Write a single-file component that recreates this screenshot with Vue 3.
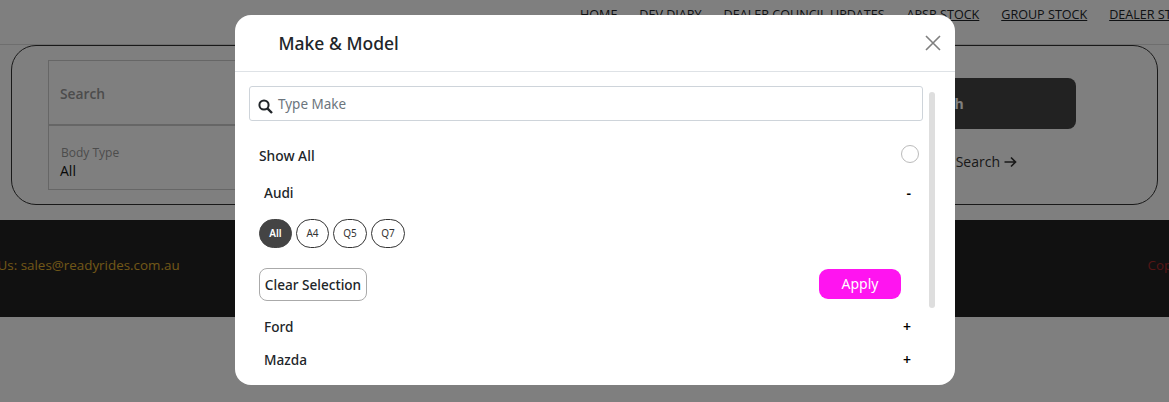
<template>
  <div class="page">
    <header class="topbar">
      <nav class="nav">
        <a v-for="link in links" :key="link" class="nav-link">{{ link }}</a>
      </nav>
    </header>

    <section class="panel">
      <div class="filters">
        <div class="filter-row search-row">Search</div>
        <div class="filter-row body-row">
          <span class="filter-label">Body Type</span>
          <span class="filter-value">All</span>
        </div>
      </div>
      <div class="actions">
        <button class="search-btn">Search</button>
        <a class="adv-link">
          Advanced Search
          <svg class="arrow" width="13" height="12" viewBox="0 0 13 12">
            <path d="M0.5 6 H11.5 M7 1.5 L11.5 6 L7 10.5" stroke="#333" stroke-width="1.7" fill="none" />
          </svg>
        </a>
      </div>
    </section>

    <footer class="footer">
      <span class="contact">Email Us: sales@readyrides.com.au</span>
      <span class="copy">Copyright</span>
    </footer>

    <div class="backdrop"></div>

    <div class="modal">
      <div class="modal-head">
        <h2 class="modal-title">Make &amp; Model</h2>
        <svg class="close" width="16" height="16" viewBox="0 0 16 16">
          <path d="M1 1 L15 15 M15 1 L1 15" stroke="#7f7f7f" stroke-width="1.6" fill="none" />
        </svg>
      </div>
      <div class="modal-body">
        <div class="scrollbar"></div>
        <div class="make-search">
          <svg class="search-icon" width="15" height="15" viewBox="0 0 15 15">
            <circle cx="6" cy="6" r="4.6" stroke="#212529" stroke-width="2" fill="none" />
            <path d="M9.6 9.6 L14 14" stroke="#212529" stroke-width="2.4" fill="none" />
          </svg>
          <span class="placeholder">Type Make</span>
        </div>
        <div class="show-all">
          <span>Show All</span>
          <span class="radio"></span>
        </div>
        <div class="make-row audi">
          <span>Audi</span>
          <span class="toggle">-</span>
        </div>
        <div class="chips">
          <span v-for="m in models" :key="m" class="chip" :class="{ active: m === 'All' }">{{ m }}</span>
        </div>
        <div class="selection">
          <button class="clear">Clear Selection</button>
          <button class="apply">Apply</button>
        </div>
        <div class="make-row ford">
          <span>Ford</span>
          <span class="toggle">+</span>
        </div>
        <div class="make-row mazda">
          <span>Mazda</span>
          <span class="toggle">+</span>
        </div>
      </div>
    </div>
  </div>
</template>

<script setup>
const links = ['HOME', 'DEV DIARY', 'DEALER COUNCIL UPDATES', 'APSR STOCK', 'GROUP STOCK', 'DEALER STOCK']
const models = ['All', 'A4', 'Q5', 'Q7']
</script>

<style>
html, body {
  margin: 0;
  background: #808080;
  overflow: hidden;
}
</style>

<style scoped>
.page {
  position: relative;
  width: 1169px;
  height: 402px;
  overflow: hidden;
  background: #fff;
  font-family: "Open Sans", "Noto Sans", sans-serif;
  color: #212529;
}

.topbar {
  height: 44px;
  border-bottom: 1px solid #ddd;
  box-sizing: content-box;
  overflow: hidden;
}

.nav {
  display: flex;
  gap: 21.9px;
  padding: 7px 0 0 580px;
  width: 800px;
}

.nav-link {
  flex: none;
  font-size: 12.6px;
  line-height: 16px;
  color: #212529;
  text-decoration: underline;
  white-space: nowrap;
}

.panel {
  display: flex;
  align-items: flex-start;
  height: 160px;
  margin: 0 11px;
  box-sizing: border-box;
  border: 1px solid #333;
  border-radius: 25px;
  padding: 14px 81px 0 36px;
}

.filters {
  width: 500px;
  height: 130px;
  box-sizing: border-box;
  border: 1px solid #ccc;
}

.filter-row {
  box-sizing: border-box;
  padding-left: 11px;
}

.search-row {
  height: 65px;
  border-bottom: 2px solid #ccc;
  line-height: 65px;
  font-size: 13.8px;
  font-weight: 600;
  color: #999;
}

.body-row {
  display: flex;
  flex-direction: column;
  padding-top: 20px;
}

.filter-label {
  padding-left: 1px;
  font-size: 12px;
  font-weight: 500;
  line-height: 14px;
  color: #999;
}

.filter-value {
  font-size: 14px;
  line-height: 22px;
  color: #111;
}

.actions {
  margin-left: auto;
  padding-top: 18px;
  width: 272px;
  display: flex;
  flex-direction: column;
  align-items: flex-end;
}

.search-btn {
  width: 272px;
  height: 51px;
  border: 0;
  border-radius: 8px;
  background: #444;
  color: #fff;
  font-family: inherit;
  font-size: 14px;
  font-weight: 700;
}

.adv-link {
  display: flex;
  align-items: center;
  gap: 4px;
  margin-top: 23px;
  margin-right: 59px;
  font-size: 14px;
  line-height: 20px;
  white-space: nowrap;
  color: #333;
}

.footer {
  display: flex;
  justify-content: space-between;
  align-items: center;
  height: 97px;
  margin-top: 15px;
  padding: 0 0 8px;
  box-sizing: border-box;
  background: #222;
  font-size: 13.4px;
}

.contact {
  margin-left: -40px;
  color: #e0b030;
}

.copy {
  margin-right: -39px;
  color: #a82c2c;
}

.backdrop {
  position: absolute;
  inset: 0;
  background: rgba(0, 0, 0, 0.5);
}

.modal {
  position: absolute;
  left: 235px;
  top: 15px;
  width: 720px;
  height: 370px;
  border-radius: 16px;
  background: #fff;
  overflow: hidden;
  font-family: "Noto Sans", "Open Sans", sans-serif;
}

.modal-head {
  display: flex;
  align-items: center;
  justify-content: space-between;
  height: 57px;
  box-sizing: border-box;
  padding: 0 14px 0 43.5px;
  border-bottom: 1px solid #dee2e6;
}

.modal-title {
  margin: 0 0 1px;
  font-size: 17.5px;
  font-weight: 500;
  line-height: 24px;
  color: #212529;
}

.modal-body {
  position: relative;
  padding: 14px 32px 0 14px;
}

.scrollbar {
  position: absolute;
  left: 694px;
  top: 20px;
  width: 6px;
  height: 216px;
  border-radius: 3px;
  background: #dedede;
}

.make-search {
  display: flex;
  align-items: center;
  gap: 5px;
  height: 35px;
  box-sizing: border-box;
  border: 1px solid #ced4da;
  border-radius: 3px;
  padding-left: 8px;
}

.search-icon {
  margin-top: 5px;
}

.placeholder {
  font-size: 13.5px;
  color: #6c757d;
  line-height: 19px;
  margin-top: 1px;
}

.show-all {
  display: flex;
  align-items: center;
  justify-content: space-between;
  height: 20px;
  margin-top: 24px;
  padding: 0 4px 0 10px;
  font-size: 13.8px;
  font-weight: 500;
}

.radio {
  width: 18px;
  height: 18px;
  box-sizing: border-box;
  border: 1px solid #bbb;
  border-radius: 50%;
  margin-top: -3px;
}

.make-row {
  display: flex;
  align-items: center;
  justify-content: space-between;
  height: 20px;
  padding: 0 12px 0 15px;
  font-size: 13.6px;
  font-weight: 500;
}

.audi {
  margin-top: 17px;
}

.toggle {
  font-size: 14px;
  font-weight: 600;
  color: #000;
}

.chips {
  display: flex;
  gap: 4px;
  margin-top: 17px;
  padding-left: 10px;
}

.chip {
  width: 34px;
  height: 29px;
  box-sizing: border-box;
  display: flex;
  align-items: center;
  justify-content: center;
  border: 1px solid #333;
  border-radius: 15px;
  padding-bottom: 1px;
  font-size: 10px;
  color: #333;
}

.chip:nth-child(2) {
  width: 33px;
}

.chip.active {
  width: 33px;
  background: #444;
  border-color: #444;
  color: #fff;
  font-weight: 600;
}

.selection {
  display: flex;
  align-items: flex-start;
  justify-content: space-between;
  margin-top: 20px;
  padding: 0 22px 0 10px;
}

.clear {
  width: 108px;
  height: 33px;
  padding: 0 0 1px;
  background: #fff;
  border: 1px solid #aaa;
  border-radius: 8px;
  font-family: inherit;
  font-size: 13.6px;
  font-weight: 500;
  color: #212529;
  white-space: nowrap;
}

.apply {
  width: 82px;
  height: 30px;
  margin-top: 1px;
  padding: 0 0 1px;
  border: 0;
  border-radius: 9px;
  background: #ff14f0;
  color: #fff;
  font-family: inherit;
  font-size: 14px;
}

.ford {
  margin-top: 15px;
}

.mazda {
  margin-top: 13px;
}
</style>
